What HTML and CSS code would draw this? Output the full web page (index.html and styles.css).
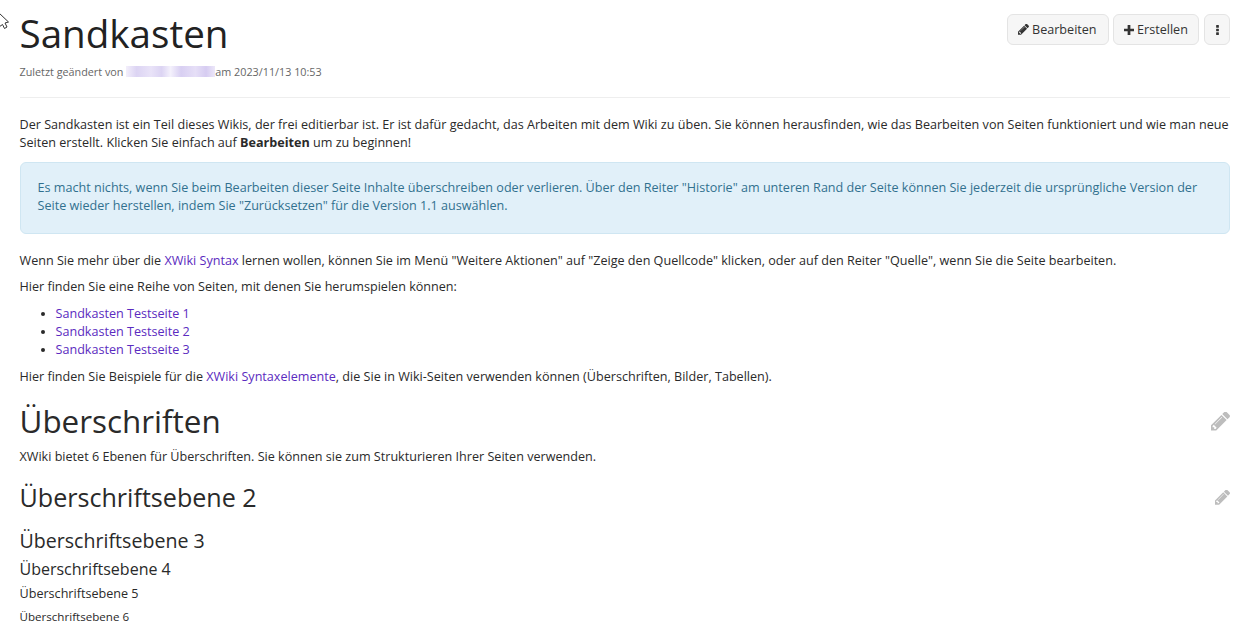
FILE: index.html
```html
<!DOCTYPE html>
<html lang="de">
<head>
<meta charset="utf-8">
<title>Sandkasten</title>
<link rel="stylesheet" href="styles.css">
</head>
<body>
<svg class="cursor" width="11" height="18" viewBox="0 0 11 18"><path d="M0 0 L9.5 9 L6 10 L8 14 L5.5 15.5 L3.5 11.5 L0 14" fill="#fff" stroke="#333" stroke-width="1"/></svg>
<svg width="0" height="0" class="defs"><defs>
<symbol id="pencil" viewBox="0 0 1515 1515"><path d="M363 1350l91-91-235-235-91 91v107h128v128h107zm523-928q0-22-22-22-10 0-17 7L305 949q-7 7-7 17 0 22 22 22 10 0 17-7l542-542q7-7 7-17zm-54-192l416 416-832 832H0v-416zm683 96q0 53-37 90l-166 166-416-416 166-165q36-38 90-38 53 0 91 38l235 234q37 39 37 91z"/></symbol>
</defs></svg>
<main class="page">
  <header class="head">
    <div class="head-text">
      <h1 class="title">Sandkasten</h1>
      <div class="meta">Zuletzt geändert von <span class="blur"></span>am 2023/11/13 10:53</div>
    </div>
    <div class="actions">
      <button class="btn btn-edit"><svg class="ic-pencil"><use href="#pencil"/></svg>Bearbeiten</button>
      <button class="btn btn-create"><svg class="ic-plus" viewBox="0 0 11 11"><path d="M4 0h3v4h4v3H7v4H4V7H0V4h4z"/></svg>Erstellen</button>
      <button class="btn btn-more"><svg class="ic-dots" viewBox="0 0 3 11"><rect width="3" height="3" rx=".6"/><rect y="4" width="3" height="3" rx=".6"/><rect y="8" width="3" height="3" rx=".6"/></svg></button>
    </div>
  </header>
  <hr class="rule">
  <p class="intro">Der Sandkasten ist ein Teil dieses Wikis, der frei editierbar ist. Er ist dafür gedacht, das Arbeiten mit dem Wiki zu üben. Sie können herausfinden, wie das Bearbeiten von Seiten funktioniert und wie man neue Seiten erstellt. Klicken Sie einfach auf <strong>Bearbeiten</strong> um zu beginnen!</p>
  <div class="info">Es macht nichts, wenn Sie beim Bearbeiten dieser Seite Inhalte überschreiben oder verlieren. Über den Reiter "Historie" am unteren Rand der Seite können Sie jederzeit die ursprüngliche Version der Seite wieder herstellen, indem Sie "Zurücksetzen" für die Version 1.1 auswählen.</div>
  <p>Wenn Sie mehr über die <a href="#">XWiki Syntax</a> lernen wollen, können Sie im Menü "Weitere Aktionen" auf "Zeige den Quellcode" klicken, oder auf den Reiter "Quelle", wenn Sie die Seite bearbeiten.</p>
  <p class="lead">Hier finden Sie eine Reihe von Seiten, mit denen Sie herumspielen können:</p>
  <ul class="links">
    <li><a href="#">Sandkasten Testseite 1</a></li>
    <li><a href="#">Sandkasten Testseite 2</a></li>
    <li><a href="#">Sandkasten Testseite 3</a></li>
  </ul>
  <p>Hier finden Sie Beispiele für die <a href="#">XWiki Syntaxelemente</a>, die Sie in Wiki-Seiten verwenden können (Überschriften, Bilder, Tabellen).</p>
  <h2 class="h-one"><span>Überschriften</span><svg class="edit edit-lg"><use href="#pencil"/></svg></h2>
  <p>XWiki bietet 6 Ebenen für Überschriften. Sie können sie zum Strukturieren Ihrer Seiten verwenden.</p>
  <h3 class="h-two"><span>Überschriftsebene 2</span><svg class="edit edit-sm"><use href="#pencil"/></svg></h3>
  <h4 class="h-three">Überschriftsebene 3</h4>
  <h5 class="h-four">Überschriftsebene 4</h5>
  <h6 class="h-five">Überschriftsebene 5</h6>
  <h6 class="h-six">Überschriftsebene 6</h6>
</main>
</body>
</html>
```
FILE: styles.css
```css
* { box-sizing: border-box; }
html, body { margin: 0; padding: 0; overflow: hidden; }
body {
  height: 638px;
  background: #fff;
  color: #2a2a2a;
  font-family: "Open Sans", sans-serif;
  font-size: 12.6px;
  line-height: 18px;
  position: relative;
}
.cursor { position: absolute; left: -1px; top: 13px; overflow: visible; }
.defs { position: absolute; }
.page { padding: 0 23px 0 19.5px; }
.head { display: flex; justify-content: space-between; align-items: flex-start; }
.title { margin: 9px 0 0; font-size: 38.6px; line-height: 48px; font-weight: 400; color: #222; }
.meta { margin-top: 7px; font-size: 10.8px; line-height: 15px; color: #666; display: flex; align-items: center; white-space: pre; }
.blur {
  display: inline-block; width: 89px; height: 11px;
  background: linear-gradient(90deg, #f3effb, #dcd4f3 12%, #e9e3f8 28%, #dcd4f3 40%, #f4f1fc 50%, #d8cff2 62%, #e6dff7 78%, #d6ccf1 90%, #ece7f9);
}
.actions { display: flex; gap: 4px; margin-top: 14px; }
.btn {
  height: 31px; padding: 0 10px;
  display: flex; align-items: center; gap: 3px;
  background: #f6f6f6; border: 1px solid #e4e4e4; border-radius: 6px;
  color: #333; font: 12.6px/18px "Open Sans", sans-serif;
}
.btn svg { flex: none; }
.btn-edit { width: 102px; }
.btn-create { width: 86px; margin-right: 1px; }
.btn-more { width: 26px; padding: 0; justify-content: center; }
.ic-pencil { width: 11px; height: 11px; fill: #333; }
.ic-plus { width: 10px; height: 10px; fill: #333; }
.ic-dots { width: 3px; height: 10px; fill: #333; }
.rule { border: 0; border-top: 1px solid #eee; margin: 18px 0 0; }
p { margin: 0 0 8px; }
.intro { margin-top: 18px; margin-bottom: 10px; }
.info {
  background: #e1f0f9; border: 1px solid #cfe6f2; border-radius: 6px;
  color: #31708f; padding: 16px 17px; margin-bottom: 18px; height: 72px;
}
.lead { margin-bottom: 9px; }
a { color: #5b2bc0; text-decoration: none; }
.links { margin: 0 0 9px; padding: 0 0 0 36px; }
.h-one, .h-two { display: flex; justify-content: space-between; align-items: center; font-weight: 400; margin: 0; }
.h-one { font-size: 31.4px; line-height: 38px; margin-top: 16px; margin-bottom: 8px; }
.h-two { font-size: 25.1px; line-height: 30px; margin-top: 16px; }
.edit { fill: #bdbdbd; }
.edit-lg { width: 19px; height: 19px; }
.edit-sm { width: 15px; height: 15px; }
.h-three { font-size: 19.6px; line-height: 24px; font-weight: 400; margin: 17px 0 0; }
.h-four { font-size: 16px; line-height: 20px; font-weight: 400; margin: 6px 0 0; }
.h-five { font-size: 12.6px; line-height: 18px; font-weight: 400; margin: 6px 0 0; }
.h-six { font-size: 11.6px; line-height: 16px; font-weight: 400; margin: 6px 0 0; }
```
